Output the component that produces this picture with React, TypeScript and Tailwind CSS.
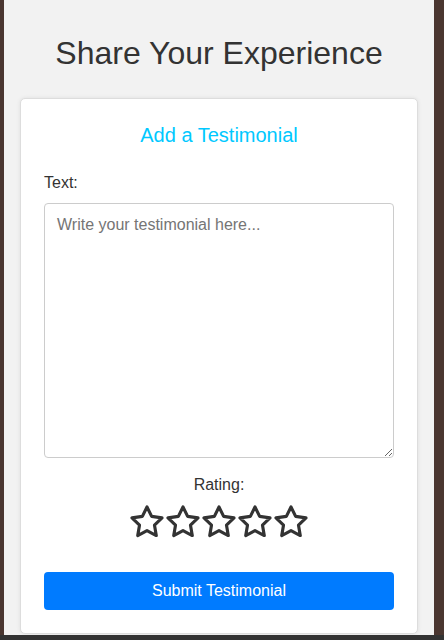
import React from 'react'

function Star() {
  return (
    <svg width="36" height="36" viewBox="0 0 24 24" fill="none" stroke="#333" strokeWidth="2.1" strokeLinejoin="round">
      <polygon points="12,2 15.09,8.26 22,9.27 17,14.14 18.18,21.02 12,17.77 5.82,21.02 7,14.14 2,9.27 8.91,8.26" />
    </svg>
  )
}

export default function App() {
  return (
    <div className="h-[640px] flex flex-col bg-[#4a3630] overflow-hidden font-['Liberation_Sans',Arial,sans-serif] text-[#333]">
      <div className="h-[635px] flex pl-[4px] pr-[10px]">
        <main className="w-[430px] bg-[#f2f2f2] px-[16px] pt-[35px]">
          <h1 className="text-[32px] leading-[37px] text-center mb-[26px]">Share Your Experience</h1>

          <section className="bg-white border border-[#dddddd] rounded-[5px] shadow-[0_0_4px_rgba(0,0,0,0.08)] px-[23px] pt-[25px] pb-[23px]">
            <h2 className="text-[20px] leading-[23px] text-center text-[#00c8ff]">Add a Testimonial</h2>

            <label className="block mt-[27px] text-base leading-[18px]">Text:</label>
            <textarea
              className="block mt-[11px] w-full h-[255px] border border-[#cccccc] rounded-[4px] px-[12px] pt-[9px] text-base outline-none placeholder:text-[#757575]"
              placeholder="Write your testimonial here..."
            />

            <div className="mt-[18px] text-center text-base leading-[18px]">Rating:</div>
            <div className="mt-[10px] flex justify-center">
              <Star />
              <Star />
              <Star />
              <Star />
              <Star />
            </div>

            <button className="mt-[32px] w-full h-[38px] rounded-[4px] bg-[#007bff] text-white text-base">
              Submit Testimonial
            </button>
          </section>
        </main>
      </div>
      <div className="flex-1 bg-[#333333]" />
    </div>
  )
}
